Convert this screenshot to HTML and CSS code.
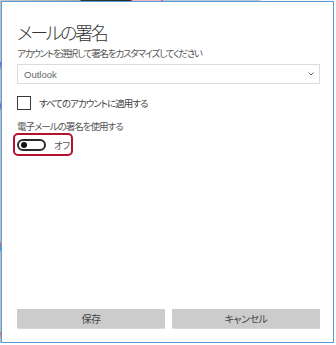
FILE: index.html
```html
<!DOCTYPE html>
<html lang="ja">
<head>
<meta charset="utf-8">
<link rel="stylesheet" href="styles.css">
</head>
<body>
<div class="screen">
  <div class="topstrip"></div>
  <div class="row">
    <div class="leftstrip"></div>
    <div class="dialog">
      <h1 class="title">メールの署名</h1>
      <p class="subtitle">アカウントを選択して署名をカスタマイズしてください</p>
      <div class="select">
        <span class="select-text">Outlook</span>
        <svg class="chev" width="6" height="4" viewBox="0 0 6 4"><path d="M0.5 0.5 L3 3 L5.5 0.5" fill="none" stroke="#666" stroke-width="1"/></svg>
      </div>
      <label class="check">
        <span class="box"></span>
        <span class="check-label">すべてのアカウントに適用する</span>
      </label>
      <p class="label">電子メールの署名を使用する</p>
      <div class="toggle-focus">
        <span class="toggle"><span class="knob"></span></span>
        <span class="toggle-text">オフ</span>
      </div>
      <div class="buttons">
        <button class="btn">保存</button>
        <button class="btn">キャンセル</button>
      </div>
    </div>
  </div>
</div>
</body>
</html>
```
FILE: styles.css
```css
html, body {
  margin: 0;
  padding: 0;
  background: #e8e8e8;
}
body {
  width: 336px;
  height: 345px;
  overflow: hidden;
  font-family: "Noto Sans CJK JP", "Noto Sans", sans-serif;
  font-feature-settings: "palt";
}
.screen {
  width: 336px;
  height: 345px;
  background: #ffffff;
  display: flex;
  flex-direction: column;
}
.topstrip {
  height: 1px;
  flex: none;
  background: linear-gradient(to right,
    #c8c8c8 0, #a8a8a8 80px,
    #2e3a2a 81px, #1f2b22 130px,
    #d01838 131px, #e8b8c8 133px, #e8b8c8 161px, #d01838 162px,
    #b8c8d8 163px, #b8c8d8 260px, #f4f4f4 261px);
}
.row {
  display: flex;
  flex: none;
  height: 342px;
}
.leftstrip {
  width: 1px;
  flex: none;
  background: linear-gradient(to bottom,
    #c0c0c0 0, #c0c0c0 60px, #6a5ad0 62px, #c0c0c0 70px,
    #c0c0c0 100px, #6a5ad0 105px, #c0c0c0 110px,
    #c0c0c0 240px, #e07050 242px, #3a9ae0 248px, #c0c0c0 252px,
    #c0c0c0 330px, #e07050 332px, #c0c0c0 338px);
}
.dialog {
  box-sizing: border-box;
  width: 333px;
  height: 342px;
  border: 1px solid #5a9bd8;
  background: #ffffff;
  padding: 0 13px 13px 15px;
  display: flex;
  flex-direction: column;
}
.title {
  margin: 17px 0 0 0;
  font-size: 18px;
  line-height: 26px;
  font-weight: 300;
  letter-spacing: -2.4px;
  color: #333333;
}
.subtitle {
  margin: 1px 0 0 0;
  font-size: 9.5px;
  line-height: 14px;
  letter-spacing: -1.2px;
  color: #555555;
}
.select {
  margin-top: 4px;
  box-sizing: border-box;
  height: 20px;
  border: 1px solid #dcdcdc;
  display: flex;
  align-items: center;
  justify-content: space-between;
  padding: 0 5px 0 6px;
}
.select-text {
  font-family: "Liberation Sans", sans-serif;
  font-size: 9.5px;
  color: #666666;
}
.chev { display: block; }
.check {
  margin-top: 12px;
  display: flex;
  align-items: center;
  height: 14px;
}
.box {
  box-sizing: border-box;
  width: 14px;
  height: 14px;
  border: 1px solid #3a3a3a;
  flex: none;
}
.check-label {
  margin-left: 8px;
  font-size: 9.5px;
  letter-spacing: -1px;
  color: #444444;
}
.label {
  margin: 9px 0 0 0;
  font-size: 9.5px;
  line-height: 14px;
  letter-spacing: -1px;
  color: #555555;
}
.toggle-focus {
  margin: 0 0 0 -4px;
  box-sizing: border-box;
  width: 60px;
  height: 23px;
  border: 2px solid #b3122e;
  border-radius: 5px;
  display: flex;
  align-items: center;
  padding-left: 2px;
}
.toggle {
  box-sizing: border-box;
  width: 29px;
  height: 12px;
  border: 2px solid #2a2a2a;
  border-radius: 6px;
  display: flex;
  align-items: center;
  padding-left: 2px;
}
.knob {
  width: 6px;
  height: 6px;
  border-radius: 50%;
  background: #111111;
}
.toggle-text {
  margin-left: 8px;
  font-size: 9.5px;
  letter-spacing: -0.5px;
  color: #555555;
}
.buttons {
  margin-top: auto;
  display: flex;
  gap: 7px;
}
.btn {
  flex: 1;
  height: 20px;
  border: none;
  border-bottom: 1px dotted #e6e6e6;
  background: #cccccc;
  font-family: "Noto Sans CJK JP", sans-serif;
  font-feature-settings: "palt";
  font-size: 10px;
  letter-spacing: -0.5px;
  color: #444444;
  padding: 0;
}
```
